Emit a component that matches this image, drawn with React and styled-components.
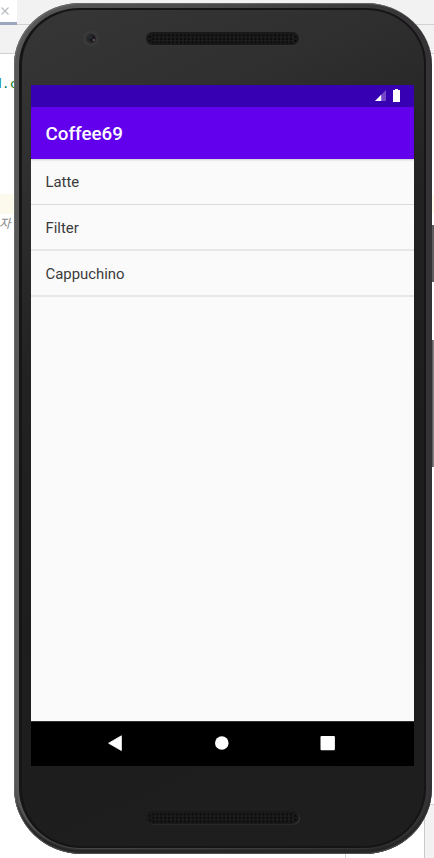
import React from "react";
import styled, { createGlobalStyle } from "styled-components";

const GlobalStyle = createGlobalStyle`
  * { box-sizing: border-box; }
  html, body { margin: 0; overflow: hidden; }
`;

const Desktop = styled.main`
  position: relative;
  width: 434px;
  height: 858px;
  overflow: hidden;
  background: #fff;
`;

const Editor = styled.div`
  height: 858px;
  display: flex;
  flex-direction: column;
`;

const TabStrip = styled.div`
  height: 25px;
  flex: none;
  background: #f2f2f2;
  border-bottom: 1px solid #d1d1d1;
`;

const Tab = styled.div`
  width: 17px;
  height: 25px;
  background: #fff;
  border-bottom: 3px solid #9ba7be;
  svg { display: block; }
`;

const Toolbar = styled.div`
  height: 29px;
  flex: none;
  background: #f2f2f2;
  border-bottom: 1px solid #d1d1d1;
`;

const Code = styled.div`
  flex: 1;
  padding-top: 20px;
`;

const CodeLine = styled.div`
  height: 20px;
  margin-top: ${(p) => p.$gap || 0}px;
  background: ${(p) => (p.$active ? "#fcfaed" : "transparent")};
  color: ${(p) => p.$color || "#000"};
  font: ${(p) => (p.$italic ? "italic 12.5px/18px 'Noto Sans CJK KR'" : "13px/20px 'DejaVu Sans Mono'")}, monospace;
  text-indent: ${(p) => p.$indent || 0}px;
  white-space: pre;
`;

const CodeDot = styled.span`
  color: #067d68;
`;

const EditorFoot = styled.div`
  height: 54px;
  display: flex;
  justify-content: flex-end;
`;

const FootRule = styled.div`
  width: 79px;
  border-left: 1px solid #d1d1d1;
`;

const FootPanel = styled.div`
  width: 10px;
  background: #f2f2f2;
  border-left: 1px solid #c9c9c9;
  border-top: 1px solid #d1d1d1;
`;

const SideButton = styled.div`
  position: absolute;
  left: 430px;
  top: ${(p) => p.$top}px;
  width: 4px;
  height: ${(p) => p.$height}px;
  background: linear-gradient(90deg, #353335 0 2px, #625f62 2px 3px, ${(p) => p.$edge} 3px);
`;

const Casing = styled.section`
  position: absolute;
  left: 14px;
  top: 3px;
  width: 417.5px;
  height: 850.5px;
  padding: 5px 6px 6px 5px;
  border-radius: 66px 66px 68px 68px / 62px 62px 66px 66px;
  background: linear-gradient(90deg, #585858 0, #484848 50%, #353335 96%, #353335 100%);
  box-shadow: inset 1px 1px 1px #6c6c6c, inset 0 -1px 1px #555, inset 0 -5px 2px #262626;
`;

const Face = styled.div`
  height: 839.5px;
  border: 2px solid #151515;
  border-left-width: 3px;
  border-radius: 61px 60px 62px 62px / 57px 56px 60px 60px;
  background: linear-gradient(155deg, #363637 0, #303030 15%, #222 36%, #1d1d1d 60%, #1e1e1e 100%);
  display: flex;
  flex-direction: column;
  padding: 1px 9px 0;
`;

const Bezel = styled.div`
  height: ${(p) => p.$height}px;
  flex: none;
  svg { display: block; }
`;

const Screen = styled.div`
  width: 383px;
  height: 681px;
  flex: none;
  background: #fafafa;
  display: flex;
  flex-direction: column;
  font-family: Roboto, sans-serif;
`;

const StatusBar = styled.div`
  height: 22px;
  background: #3700b3;
  display: flex;
  justify-content: flex-end;
  svg { display: block; }
`;

const AppBar = styled.header`
  height: 52px;
  padding-left: 14.5px;
  background: #6200ee;
  box-shadow: 0 1px 2px rgba(0, 0, 0, 0.18);
  color: #fff;
  font-size: 18.8px;
  font-weight: 500;
  line-height: 54px;
  z-index: 1;
`;

const List = styled.ul`
  list-style: none;
  margin: 0;
  padding: 0;
  flex: 1;
`;

const Item = styled.li`
  height: ${(p) => p.$height}px;
  padding-left: 14.5px;
  border-bottom: ${(p) => p.$rule}px solid ${(p) => (p.$rule > 1 ? "#e7e7e7" : "#dadada")};
  color: #3a3a3a;
  font-size: 14.9px;
  line-height: 46px;
`;

const NavBar = styled.nav`
  height: 45px;
  background: #000;
  border-top: 1px solid #303430;
  svg { display: block; }
`;

const Drawing = ({ w, h, children }) => (
  <svg width={w} height={h} viewBox={`0 0 ${w} ${h}`}>{children}</svg>
);

/* Slot with three staggered rows of perforations */
const Speaker = ({ y }) => (
  <g transform={`translate(115 ${y})`}>
    <rect x="1" y="1" width="153" height="12.5" rx="6.2" fill="#343434" />
    <rect width="153" height="13" rx="6.5" fill="#191919" />
    {Array.from({ length: 36 }, (_, i) => (
      <g key={i} fill="#0b0b0b">
        <rect x={6.5 + i * 3.93} y="2.5" width="1.8" height="1.8" />
        <rect x={6.5 + i * 3.93} y="6" width="1.8" height="1.8" />
        <rect x={6.5 + i * 3.93} y="9.5" width="1.8" height="1.8" />
        <rect x={8.6 + i * 3.93} y="4.5" width="1" height="1" fill="#292929" />
        <rect x={8.6 + i * 3.93} y="8" width="1" height="1" fill="#272727" />
      </g>
    ))}
    <g fill="#090909">
      <rect x="3" y="4" width="1.6" height="1.6" />
      <rect x="3" y="8" width="1.6" height="1.6" />
      <rect x="148.6" y="4" width="1.6" height="1.6" />
      <rect x="148.6" y="8" width="1.6" height="1.6" />
    </g>
  </g>
);

const coffees = [
  { name: "Latte", height: 46, rule: 1 },
  { name: "Filter", height: 46, rule: 2 },
  { name: "Cappuchino", height: 46, rule: 2 },
];

export default function App() {
  return (
    <Desktop>
      <GlobalStyle />
      <Editor>
        <TabStrip>
          <Tab>
            <Drawing w={17} h={22}>
              <path d="M1.5 7.5l7 7m0-7l-7 7" stroke="#b9bcbf" strokeWidth="1.2" />
            </Drawing>
          </Tab>
        </TabStrip>
        <Toolbar />
        <Code>
          <CodeLine $color="#067d17" $indent={-6}>
            <CodeDot>d.</CodeDot>c
          </CodeLine>
          <CodeLine $active $gap={100} />
          <CodeLine $italic $color="#8c8c8c" $indent={-1}>자</CodeLine>
        </Code>
        <EditorFoot>
          <FootRule />
          <FootPanel />
        </EditorFoot>
      </Editor>
      <SideButton $top={225} $height={57} $edge="#5d5a5d" />
      <SideButton $top={340} $height={127} $edge="#858385" />
      <Casing>
        <Face>
          <Bezel $height={74}>
            <Drawing w={383} h={74}>
              <circle cx="60" cy="27.5" r="8.3" fill="#393939" />
              <circle cx="60" cy="27.5" r="5" fill="#2a2a2b" />
              <circle cx="61" cy="27.5" r="3.2" fill="#1a1a20" />
              <circle cx="59.5" cy="26.4" r="1.4" fill="#2a2d3b" />
              <circle cx="62.8" cy="29" r="1.1" fill="#755763" />
              <Speaker y={21} />
            </Drawing>
          </Bezel>
          <Screen>
            <StatusBar>
              <Drawing w={44} h={22}>
                <path d="M16 5v11H5z" fill="#7349ca" />
                <path d="M11.2 9.8V16H5z" fill="#fff" />
                <path d="M25 4h3v1h2v12h-7V5h2z" fill="#fff" />
              </Drawing>
            </StatusBar>
            <AppBar>Coffee69</AppBar>
            <List>
              {coffees.map((c) => (
                <Item key={c.name} $height={c.height} $rule={c.rule}>{c.name}</Item>
              ))}
            </List>
            <NavBar>
              <Drawing w={383} h={44}>
                <path d="M77.6 21.2L90.4 13.8v14.8z" fill="#fff" stroke="#fff" strokeWidth=".8" strokeLinejoin="round" />
                <circle cx="190.8" cy="21" r="6.8" fill="#fff" />
                <rect x="289.5" y="14" width="14.4" height="14.2" rx="1" fill="#fff" />
              </Drawing>
            </NavBar>
          </Screen>
          <Bezel $height={78}>
            <Drawing w={383} h={78}>
              <Speaker y={45} />
            </Drawing>
          </Bezel>
        </Face>
      </Casing>
    </Desktop>
  );
}
